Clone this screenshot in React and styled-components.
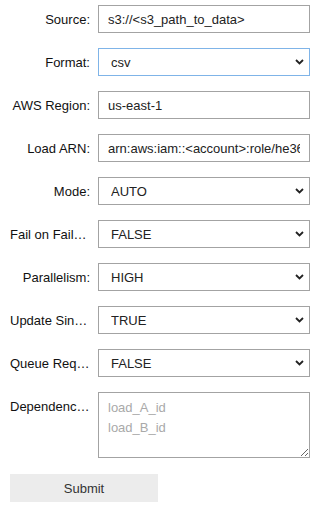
import React from "react";
import styled, { createGlobalStyle } from "styled-components";

const Global = createGlobalStyle`
  html, body { margin: 0; padding: 0; background: #fff; }
  body { font-family: "Liberation Sans", Arial, sans-serif; }
  * { box-sizing: border-box; }
`;

const Form = styled.form`
  width: 320px;
  padding: 5px 10px 10px 10px;
  display: flex;
  flex-direction: column;
  gap: 15px;
`;

const Row = styled.div`
  display: grid;
  grid-template-columns: 80px 212px;
  column-gap: 8px;
  align-items: ${(p) => (p.$top ? "start" : "center")};
`;

const Label = styled.label`
  font-size: 13px;
  color: #111;
  text-align: ${(p) => (p.$truncated ? "left" : "right")};
  white-space: nowrap;
  overflow: hidden;
  text-overflow: ellipsis;
  padding-top: ${(p) => (p.$top ? "7px" : "0")};
`;

const TextInput = styled.input`
  height: 28px;
  width: 212px;
  border: 1px solid #a3a3a3;
  border-radius: 0;
  padding: 0 9px;
  font-family: "Liberation Sans", Arial, sans-serif;
  font-size: 13px;
  color: #222;
  outline: none;
  background: #fff;
`;

const SelectWrap = styled.div`
  position: relative;
  width: 212px;
  height: 28px;
`;

const Select = styled.select`
  appearance: none;
  -webkit-appearance: none;
  width: 100%;
  height: 28px;
  border: 1px solid ${(p) => (p.$focused ? "#7fb4e8" : "#a3a3a3")};
  border-radius: 0;
  padding: 0 24px 0 12px;
  font-family: "Liberation Sans", Arial, sans-serif;
  font-size: 13px;
  color: #222;
  background: #fff;
  outline: none;
`;

const Chevron = styled.svg`
  position: absolute;
  right: 6px;
  top: 11px;
  width: 9px;
  height: 6px;
  pointer-events: none;
`;

const TextArea = styled.textarea`
  width: 212px;
  height: 66px;
  border: 1px solid #a3a3a3;
  border-radius: 0;
  padding: 5px 9px;
  font-family: "Liberation Sans", Arial, sans-serif;
  font-size: 13px;
  line-height: 20px;
  color: #222;
  outline: none;
  resize: both;
  &::placeholder { color: #a9a9a9; }
`;

const Submit = styled.button`
  margin-top: 1px;
  width: 148px;
  height: 28px;
  border: none;
  background: #ececec;
  color: #333;
  font-family: "Liberation Sans", Arial, sans-serif;
  font-size: 13px;
  cursor: pointer;
`;

const Arrow = () => (
  <Chevron viewBox="0 0 9 6">
    <path d="M1 1 L4.5 4.5 L8 1" fill="none" stroke="#222" strokeWidth="1.8" />
  </Chevron>
);

const Dropdown = ({ value, options, focused }) => (
  <SelectWrap>
    <Select defaultValue={value} $focused={focused}>
      {options.map((o) => (
        <option key={o} value={o}>{o}</option>
      ))}
    </Select>
    <Arrow />
  </SelectWrap>
);

const bool = ["TRUE", "FALSE"];

export default function App() {
  return (
    <>
      <Global />
      <Form onSubmit={(e) => e.preventDefault()}>
        <Row>
          <Label>Source:</Label>
          <TextInput defaultValue="s3://<s3_path_to_data>" />
        </Row>
        <Row>
          <Label>Format:</Label>
          <Dropdown value="csv" options={["csv", "opencypher", "ntriples", "nquads", "rdfxml", "turtle"]} focused />
        </Row>
        <Row>
          <Label>AWS Region:</Label>
          <TextInput defaultValue="us-east-1" />
        </Row>
        <Row>
          <Label>Load ARN:</Label>
          <TextInput defaultValue="arn:aws:iam::<account>:role/he36" />
        </Row>
        <Row>
          <Label>Mode:</Label>
          <Dropdown value="AUTO" options={["RESUME", "NEW", "AUTO"]} />
        </Row>
        <Row>
          <Label $truncated>Fail on Failure:</Label>
          <Dropdown value="FALSE" options={bool} />
        </Row>
        <Row>
          <Label>Parallelism:</Label>
          <Dropdown value="HIGH" options={["LOW", "MEDIUM", "HIGH", "OVERSUBSCRIBE"]} />
        </Row>
        <Row>
          <Label $truncated>Update Single Cardinality:</Label>
          <Dropdown value="TRUE" options={bool} />
        </Row>
        <Row>
          <Label $truncated>Queue Request:</Label>
          <Dropdown value="FALSE" options={bool} />
        </Row>
        <Row $top>
          <Label $truncated $top>Dependencies:</Label>
          <TextArea placeholder={"load_A_id\nload_B_id"} />
        </Row>
        <div>
          <Submit type="submit">Submit</Submit>
        </div>
      </Form>
    </>
  );
}
